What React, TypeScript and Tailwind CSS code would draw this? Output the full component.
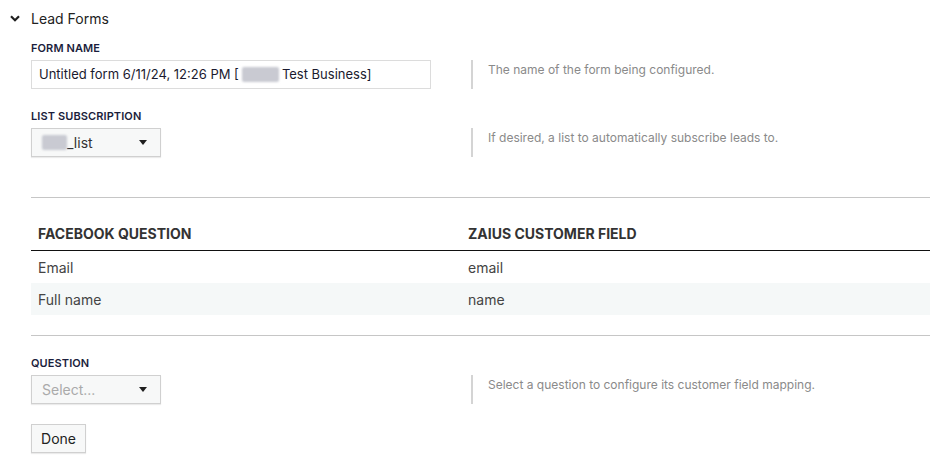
import React from "react";

// Blurred-out bits of the original screenshot (redacted names)
function Redacted({ w }: { w: number }) {
  return (
    <span
      className="inline-block h-[15px] align-middle bg-[#c9cad2] blur-[1px] rounded-[2px]"
      style={{ width: w }}
    />
  );
}

function Caret() {
  return (
    <svg width="8" height="5" viewBox="0 0 8 5" className="shrink-0">
      <path d="M0 0 L8 0 L4 5 Z" fill="#1f1f1f" />
    </svg>
  );
}

function Help({ text }: { text: string }) {
  return (
    <div className="flex h-[29px] border-l-2 border-[#d4d4d4] pl-[15px] pt-[2px]">
      <span className="text-[12px] leading-[16px] text-[#8a8a8a]">{text}</span>
    </div>
  );
}

function Label({ children }: { children: React.ReactNode }) {
  return (
    <div className="h-[14px] text-[11px] leading-[14px] font-semibold text-[#1b1e3c] tracking-[0.1px]">
      {children}
    </div>
  );
}

// control on the left, help text in the right column
function Field({ label, control, help }: { label: string; control: React.ReactNode; help: string }) {
  return (
    <div>
      <Label>{label}</Label>
      <div className="flex mt-[5px]">
        <div className="w-[440px] shrink-0">{control}</div>
        <Help text={help} />
      </div>
    </div>
  );
}

const selectCls =
  "w-[130px] h-[29px] flex items-center justify-between border border-[#d0d0d0] bg-[#f7f8f8] shadow-[0_1px_1px_rgba(0,0,0,0.08)] pl-[10px] pr-[13px] text-[14px]";

const rows = [
  { q: "Email", f: "email" },
  { q: "Full name", f: "name" },
];

export default function App() {
  return (
    <div
      className="w-[940px] h-[467px] bg-white overflow-hidden"
      style={{ fontFamily: "Inter, 'Noto Sans', sans-serif" }}
    >
      <div className="h-[36px] flex items-center">
        <svg width="10" height="7" viewBox="0 0 10 7" className="ml-[10px]">
          <polyline points="1,1.2 5,5.2 9,1.2" fill="none" stroke="#1f1f1f" strokeWidth="2.2" />
        </svg>
        <span className="ml-[11px] text-[14px] text-[#222]">Lead Forms</span>
      </div>

      <div className="pl-[31px] pr-[10px]">
        <div className="mt-[5px]">
          <Field
            label="FORM NAME"
            help="The name of the form being configured."
            control={
              <div className="w-[400px] h-[29px] flex items-center border border-[#dcdcdc] bg-white px-[7px] text-[13px] text-[#1a1a2e] whitespace-nowrap">
                Untitled form 6/11/24, 12:26 PM [
                <span className="mx-[3px] flex items-center">
                  <Redacted w={37} />
                </span>
                Test Business]
              </div>
            }
          />
        </div>

        <div className="mt-[20px]">
          <Field
            label="LIST SUBSCRIPTION"
            help="If desired, a list to automatically subscribe leads to."
            control={
              <div className={`${selectCls} text-[#333]`}>
                <span className="flex items-center">
                  <Redacted w={25} />
                  <span>_list</span>
                </span>
                <Caret />
              </div>
            }
          />
        </div>

        <div className="mt-[40px] border-t border-[#c6c6c6]" />

        {/* mapping table */}
        <div className="mt-[26px]">
          <div className="flex border-b border-[#111] pb-[6px] text-[14px] leading-[20px] font-bold text-[#333]">
            <div className="w-[430px] pl-[7px]">FACEBOOK QUESTION</div>
            <div className="pl-[7px]">ZAIUS CUSTOMER FIELD</div>
          </div>
          {rows.map((r, i) => (
            <div
              key={r.q}
              className={`flex h-[32px] items-center text-[14px] text-[#444] ${
                i % 2 === 1 ? "bg-[#f5f8f8]" : "bg-white"
              }`}
            >
              <div className="w-[430px] pl-[7px]">{r.q}</div>
              <div className="pl-[7px]">{r.f}</div>
            </div>
          ))}
        </div>

        <div className="mt-[20px] border-t border-[#c6c6c6]" />

        <div className="mt-[20px]">
          <Field
            label="QUESTION"
            help="Select a question to configure its customer field mapping."
            control={
              <div className={`${selectCls} text-[#aaa]`}>
                <span>Select...</span>
                <Caret />
              </div>
            }
          />
        </div>

        <button className="mt-[20px] h-[29px] w-[55px] border border-[#d0d0d0] bg-[#f7f8f8] shadow-[0_1px_1px_rgba(0,0,0,0.08)] text-[14px] text-[#222]">
          Done
        </button>
      </div>
    </div>
  );
}
